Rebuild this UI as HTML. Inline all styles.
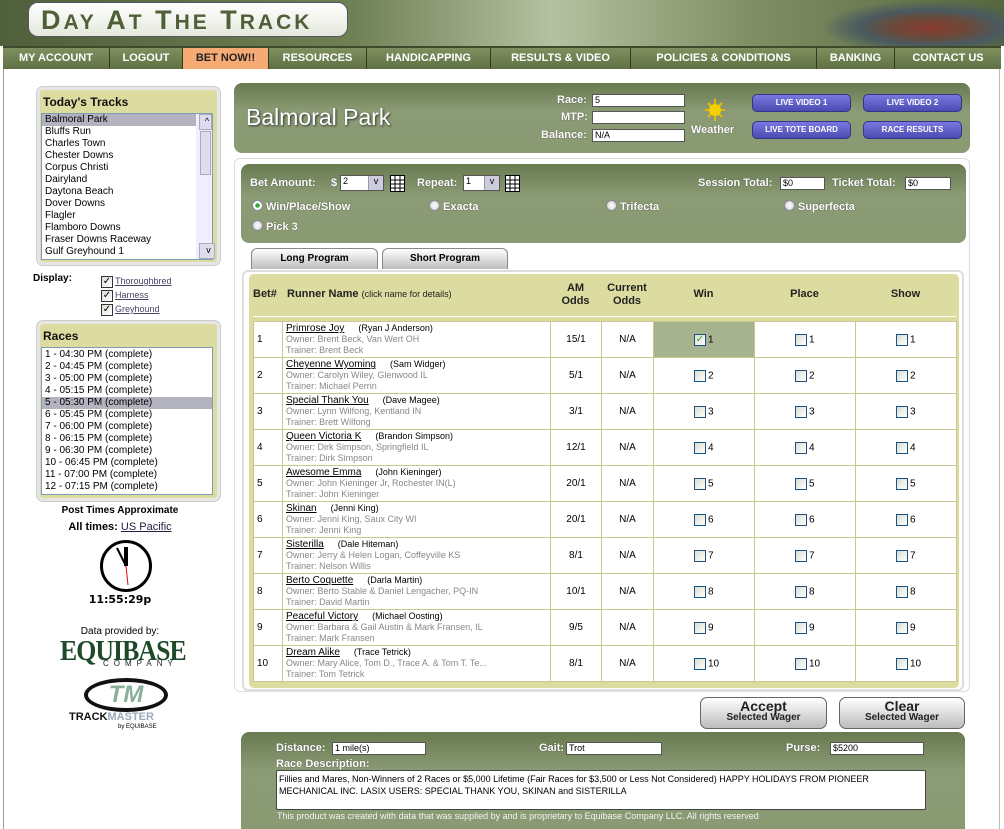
<!DOCTYPE html>
<html><head><meta charset="utf-8">
<style>
*{margin:0;padding:0;box-sizing:border-box}
body{width:1004px;height:829px;overflow:hidden;background:#fff;font-family:"Liberation Sans",sans-serif;position:relative;font-size:11px;color:#000}
.a{position:absolute}
.hdr{left:0;top:0;width:1004px;height:46px;background:linear-gradient(90deg,#4f603a 0%,#6f8055 35%,#b5c1a0 55%,#7f8e64 75%,#56673d 100%)}
.logo{left:28px;top:2px;width:320px;height:35px;background:linear-gradient(#fff,#e4e8dc);border:1px solid #556;border-radius:10px;font:bold 27px "Liberation Sans",sans-serif;color:#4f5f37;padding:2px 0 0 12px;letter-spacing:3px;white-space:nowrap}
.logo small{font-size:21px}
.nav{left:3px;top:46px;width:998px;height:23px;background:linear-gradient(#7f9060,#5f7042);border-top:2px solid #3f4a2b;display:flex}
.nav div{color:#fff;font-weight:bold;font-size:11px;text-align:center;line-height:21px;border-right:1px solid #2f3a1f}
.nav .on{background:#f6ab74;color:#222}
.side{left:3px;top:69px;width:1px;height:760px;background:#999}
.sider{left:999px;top:69px;width:1px;height:760px;background:#bbb}
.box{background:#dcdca0;border:3px solid #e6e6e6;border-radius:6px;box-shadow:0 0 0 1px #ccc}
.box h3{font-size:12px;font-weight:bold;padding:5px 3px 3px;color:#111}
.lst{background:#fff;border:1px solid #7f9db9;position:absolute;font-size:10px;line-height:12px}
.lst div{padding-left:3px;white-space:nowrap}
.sel{background:#b3b3c0}
.sb{position:absolute;right:0;top:0;width:16px;height:100%;background:#eef}
.green{background:linear-gradient(#687a50,#8b9b75 40%,#8a9a72);border-radius:8px}
.lab{color:#fff;font-weight:bold;font-size:11px;position:absolute;text-shadow:0 0 1px #333}
.inp{position:absolute;background:#fff;border:1px solid #555;height:13px;font-size:9px;line-height:11px;padding-left:2px}
.btn{position:absolute;width:99px;height:18px;border-radius:5px;background:linear-gradient(#7878e0,#4b4bb0);border:1px solid #33338a;color:#fff;font-weight:bold;font-size:8px;text-align:center;line-height:16px}
.tab{position:absolute;height:21px;border:1px solid #888;border-bottom:none;border-radius:6px 6px 0 0;background:linear-gradient(#fff,#bdbdbd);font-weight:bold;font-size:10px;text-align:center;line-height:20px}
table{border-collapse:collapse;position:absolute;left:253px;top:321px;width:703px;table-layout:fixed;background:#fff}
td{border:1px solid #c8c890;height:36px;font-size:10px;vertical-align:middle}
td.n{padding-left:3px;line-height:11px;font-size:9px;color:#888}
td.n a{color:#000;text-decoration:underline;font-size:10px}
td.n span{color:#000;margin-left:14px}
td.c{text-align:center}
td.w{padding-left:40px;font-size:10px}
.cb{display:inline-block;width:12px;height:12px;border:1px solid #1c5180;background:linear-gradient(135deg,#dcdcd4,#fff);vertical-align:middle;margin-right:2px;font-size:10px;line-height:10px;color:#2a2;text-align:center}
.hd{position:absolute;font-weight:bold;font-size:11px;color:#222;text-align:center}
.bigb{position:absolute;height:32px;border:1px solid #666;border-radius:7px;background:linear-gradient(#fff,#bcbcbc);text-align:center;color:#222;font-weight:bold;line-height:11px}
.bigb b{font-size:14px;display:block;margin-top:3px}
.bigb i{font-style:normal;font-size:10px}
.radio{display:inline-block;width:11px;height:11px;border-radius:50%;background:radial-gradient(#fff,#ccc);border:1px solid #889;vertical-align:-1px;margin-right:3px}
</style></head><body>
<div class="a hdr"></div>
<div class="a" style="left:820px;top:0;width:184px;height:46px;background:radial-gradient(ellipse at 60% 60%,#8a3a30 0%,#6a4a3a 25%,#4a5a60 45%,transparent 70%)"></div>
<div class="a logo">D<small>AY</small> A<small>T</small> T<small>HE</small> T<small>RACK</small></div>
<div class="a nav">
<div style="width:107px">MY ACCOUNT</div><div style="width:73px">LOGOUT</div><div class="on" style="width:86px">BET NOW!!</div><div style="width:98px">RESOURCES</div><div style="width:124px">HANDICAPPING</div><div style="width:140px">RESULTS &amp; VIDEO</div><div style="width:186px">POLICIES &amp; CONDITIONS</div><div style="width:78px">BANKING</div><div style="width:106px;border:none">CONTACT US</div>
</div>
<div class="a side"></div><div class="a sider"></div>

<div class="a box" style="left:37px;top:87px;width:183px;height:178px"><h3>Today's Tracks</h3></div>
<div class="lst" style="left:41px;top:113px;width:172px;height:147px">
<div class="sel">Balmoral Park</div><div>Bluffs Run</div><div>Charles Town</div><div>Chester Downs</div><div>Corpus Christi</div><div>Dairyland</div><div>Daytona Beach</div><div>Dover Downs</div><div>Flagler</div><div>Flamboro Downs</div><div>Fraser Downs Raceway</div><div>Gulf Greyhound 1</div>
<div class="sb"><div style="height:16px;background:#dde;border:1px solid #aab;font-size:9px;text-align:center">^</div><div style="margin:1px;height:44px;background:#dde;border:1px solid #aab"></div><div style="position:absolute;bottom:0;width:16px;height:16px;background:#dde;border:1px solid #aab;font-size:9px;text-align:center">v</div></div>
</div>
<div class="a" style="left:33px;top:273px;font-weight:bold;font-size:10px">Display:</div>
<div class="a" style="left:101px;top:274px;font-size:9px;line-height:14px">
<div><span class="cb" style="color:#000;border-color:#333">✓</span><u style="color:#446">Thoroughbred</u></div>
<div><span class="cb" style="color:#000;border-color:#333">✓</span><u style="color:#446">Harness</u></div>
<div><span class="cb" style="color:#000;border-color:#333">✓</span><u style="color:#446">Greyhound</u></div></div>

<div class="a box" style="left:37px;top:321px;width:183px;height:180px"><h3>Races</h3></div>
<div class="lst" style="left:41px;top:347px;width:172px;height:148px;padding-top:1px">
<div>1 - 04:30 PM (complete)</div><div>2 - 04:45 PM (complete)</div><div>3 - 05:00 PM (complete)</div><div>4 - 05:15 PM (complete)</div><div class="sel">5 - 05:30 PM (complete)</div><div>6 - 05:45 PM (complete)</div><div>7 - 06:00 PM (complete)</div><div>8 - 06:15 PM (complete)</div><div>9 - 06:30 PM (complete)</div><div>10 - 06:45 PM (complete)</div><div>11 - 07:00 PM (complete)</div><div>12 - 07:15 PM (complete)</div></div>
<div class="a" style="left:0;width:240px;top:505px;text-align:center;font-weight:bold;font-size:10px">Post Times Approximate</div>
<div class="a" style="left:0;width:240px;top:521px;text-align:center;font-size:11px"><b>All times:</b> <u style="color:#224">US Pacific</u></div>
<svg class="a" style="left:99px;top:539px" width="56" height="56"><circle cx="27" cy="27" r="24.5" fill="#fff" stroke="#000" stroke-width="3"/><line x1="27" y1="27" x2="27" y2="8" stroke="#000" stroke-width="4"/><line x1="27" y1="27" x2="18" y2="9" stroke="#000" stroke-width="2"/><line x1="27" y1="27" x2="29" y2="46" stroke="#e00" stroke-width="1"/></svg>
<div class="a" style="left:0;width:240px;top:593px;text-align:center;font-weight:bold;font-size:11px;font-family:'DejaVu Sans',sans-serif">11:55:29p</div>
<div class="a" style="left:0;width:240px;top:626px;text-align:center;font-size:10px">Data provided by:</div>
<div class="a" style="left:60px;top:636px;font:bold 28px 'Liberation Serif',serif;color:#1f4a2a;transform:scaleX(0.92);transform-origin:left;letter-spacing:-1px">EQUIBASE</div>
<div class="a" style="left:103px;top:659px;font-size:8px;letter-spacing:5px;color:#222">COMPANY</div>
<div class="a" style="left:84px;top:678px;width:84px;height:34px;border:4px solid #111;border-radius:50%;background:#fff;text-align:center;font:italic bold 24px 'Liberation Sans',sans-serif;color:#8ab09a;line-height:26px">TM</div>
<div class="a" style="left:69px;top:711px;font:bold 11px 'Liberation Sans',sans-serif;color:#111">TRACK<span style="color:#9ab">MASTER</span></div>
<div class="a" style="left:118px;top:724px;font-size:6px">by EQUIBASE</div>

<div class="a green" style="left:234px;top:83px;width:736px;height:70px"></div>
<div class="a" style="left:246px;top:104px;color:#fff;font-size:23px;text-shadow:1px 1px 2px #333">Balmoral Park</div>
<div class="lab" style="left:557px;top:94px">Race:</div><div class="inp" style="left:592px;top:94px;width:93px">5</div>
<div class="lab" style="left:561px;top:111px">MTP:</div><div class="inp" style="left:592px;top:111px;width:93px"></div>
<div class="lab" style="left:541px;top:129px">Balance:</div><div class="inp" style="left:592px;top:129px;width:93px">N/A</div>
<svg class="a" style="left:704px;top:98px" width="22" height="24"><g stroke="#e8b800" stroke-width="2"><line x1="11" y1="1" x2="11" y2="23"/><line x1="1" y1="12" x2="21" y2="12"/><line x1="4" y1="5" x2="18" y2="19"/><line x1="18" y1="5" x2="4" y2="19"/></g><circle cx="11" cy="12" r="6" fill="#f4d000"/></svg>
<div class="lab" style="left:691px;top:124px">Weather</div>
<div class="btn" style="left:752px;top:94px">LIVE VIDEO 1</div><div class="btn" style="left:863px;top:94px">LIVE VIDEO 2</div>
<div class="btn" style="left:752px;top:121px">LIVE TOTE BOARD</div><div class="btn" style="left:863px;top:121px">RACE RESULTS</div>

<div class="a" style="left:234px;top:158px;width:736px;height:534px;border:1px solid #ddd;border-radius:6px"></div>
<div class="a green" style="left:241px;top:164px;width:725px;height:79px"></div>
<div class="lab" style="left:250px;top:177px">Bet Amount:</div><div class="lab" style="left:331px;top:177px">$</div>
<div class="inp" style="left:340px;top:175px;width:44px;height:16px">2<span style="position:absolute;right:0;top:0;width:15px;height:14px;background:#ccd;border-left:1px solid #99a;text-align:center">v</span></div>
<svg class="a" style="left:390px;top:175px" width="15" height="17"><rect x=".5" y=".5" width="14" height="16" fill="#fff" stroke="#000"/><path d="M0 5H15M0 9H15M0 13H15M5 0V17M10 0V17" stroke="#000"/></svg>
<div class="lab" style="left:417px;top:177px">Repeat:</div>
<div class="inp" style="left:463px;top:175px;width:37px;height:16px">1<span style="position:absolute;right:0;top:0;width:15px;height:14px;background:#ccd;border-left:1px solid #99a;text-align:center">v</span></div>
<svg class="a" style="left:505px;top:175px" width="15" height="17"><rect x=".5" y=".5" width="14" height="16" fill="#fff" stroke="#000"/><path d="M0 5H15M0 9H15M0 13H15M5 0V17M10 0V17" stroke="#000"/></svg>
<div class="lab" style="left:698px;top:177px">Session Total:</div><div class="inp" style="left:780px;top:177px;width:45px">$0</div>
<div class="lab" style="left:832px;top:177px">Ticket Total:</div><div class="inp" style="left:905px;top:177px;width:46px">$0</div>
<div class="lab" style="left:252px;top:200px"><span class="radio" style="background:radial-gradient(#3a3 30%,#fff 40%)"></span>Win/Place/Show</div>
<div class="lab" style="left:429px;top:200px"><span class="radio"></span>Exacta</div>
<div class="lab" style="left:606px;top:200px"><span class="radio"></span>Trifecta</div>
<div class="lab" style="left:784px;top:200px"><span class="radio"></span>Superfecta</div>
<div class="lab" style="left:252px;top:220px"><span class="radio"></span>Pick 3</div>
<div class="tab" style="left:251px;top:248px;width:127px">Long Program</div>
<div class="tab" style="left:382px;top:248px;width:126px">Short Program</div>

<div class="a" style="left:242px;top:270px;width:722px;height:421px;border:2px solid #ddd;border-radius:6px"></div>
<div class="a" style="left:249px;top:274px;width:710px;height:414px;background:#dcdca0;border-radius:5px"></div>
<div class="a" style="left:253px;top:316px;width:703px;height:1px;background:#fff"></div>
<div class="hd" style="left:253px;top:288px">Bet#</div>
<div class="hd" style="left:287px;top:288px">Runner Name <span style="font-weight:normal;font-size:9px">(click name for details)</span></div>
<div class="hd" style="left:550px;top:282px;width:51px;line-height:13px">AM<br>Odds</div>
<div class="hd" style="left:601px;top:282px;width:52px;line-height:13px">Current<br>Odds</div>
<div class="hd" style="left:653px;top:288px;width:101px">Win</div>
<div class="hd" style="left:754px;top:288px;width:101px">Place</div>
<div class="hd" style="left:855px;top:288px;width:101px">Show</div>
<table>
<colgroup><col style="width:29px"><col style="width:268px"><col style="width:51px"><col style="width:52px"><col style="width:101px"><col style="width:101px"><col style="width:101px"></colgroup>
<tr><td style="padding-left:3px">1</td><td class="n"><a>Primrose Joy</a><span>(Ryan J Anderson)</span><br>Owner: Brent Beck, Van Wert OH<br>Trainer: Brent Beck</td><td class="c">15/1</td><td class="c">N/A</td><td class="w" style="background:#a7b28e"><span class="cb">✓</span>1</td><td class="w"><span class="cb"></span>1</td><td class="w"><span class="cb"></span>1</td></tr>
<tr><td style="padding-left:3px">2</td><td class="n"><a>Cheyenne Wyoming</a><span>(Sam Widger)</span><br>Owner: Carolyn Wiley, Glenwood IL<br>Trainer: Michael Perrin</td><td class="c">5/1</td><td class="c">N/A</td><td class="w"><span class="cb"></span>2</td><td class="w"><span class="cb"></span>2</td><td class="w"><span class="cb"></span>2</td></tr>
<tr><td style="padding-left:3px">3</td><td class="n"><a>Special Thank You</a><span>(Dave Magee)</span><br>Owner: Lynn Wilfong, Kentland IN<br>Trainer: Brett Wilfong</td><td class="c">3/1</td><td class="c">N/A</td><td class="w"><span class="cb"></span>3</td><td class="w"><span class="cb"></span>3</td><td class="w"><span class="cb"></span>3</td></tr>
<tr><td style="padding-left:3px">4</td><td class="n"><a>Queen Victoria K</a><span>(Brandon Simpson)</span><br>Owner: Dirk Simpson, Springfield IL<br>Trainer: Dirk Simpson</td><td class="c">12/1</td><td class="c">N/A</td><td class="w"><span class="cb"></span>4</td><td class="w"><span class="cb"></span>4</td><td class="w"><span class="cb"></span>4</td></tr>
<tr><td style="padding-left:3px">5</td><td class="n"><a>Awesome Emma</a><span>(John Kieninger)</span><br>Owner: John Kieninger Jr, Rochester IN(L)<br>Trainer: John Kieninger</td><td class="c">20/1</td><td class="c">N/A</td><td class="w"><span class="cb"></span>5</td><td class="w"><span class="cb"></span>5</td><td class="w"><span class="cb"></span>5</td></tr>
<tr><td style="padding-left:3px">6</td><td class="n"><a>Skinan</a><span>(Jenni King)</span><br>Owner: Jenni King, Saux City WI<br>Trainer: Jenni King</td><td class="c">20/1</td><td class="c">N/A</td><td class="w"><span class="cb"></span>6</td><td class="w"><span class="cb"></span>6</td><td class="w"><span class="cb"></span>6</td></tr>
<tr><td style="padding-left:3px">7</td><td class="n"><a>Sisterilla</a><span>(Dale Hiteman)</span><br>Owner: Jerry &amp; Helen Logan, Coffeyville KS<br>Trainer: Nelson Willis</td><td class="c">8/1</td><td class="c">N/A</td><td class="w"><span class="cb"></span>7</td><td class="w"><span class="cb"></span>7</td><td class="w"><span class="cb"></span>7</td></tr>
<tr><td style="padding-left:3px">8</td><td class="n"><a>Berto Coquette</a><span>(Darla Martin)</span><br>Owner: Berto Stable &amp; Daniel Lengacher, PQ-IN<br>Trainer: David Martin</td><td class="c">10/1</td><td class="c">N/A</td><td class="w"><span class="cb"></span>8</td><td class="w"><span class="cb"></span>8</td><td class="w"><span class="cb"></span>8</td></tr>
<tr><td style="padding-left:3px">9</td><td class="n"><a>Peaceful Victory</a><span>(Michael Oosting)</span><br>Owner: Barbara &amp; Gail Austin &amp; Mark Fransen, IL<br>Trainer: Mark Fransen</td><td class="c">9/5</td><td class="c">N/A</td><td class="w"><span class="cb"></span>9</td><td class="w"><span class="cb"></span>9</td><td class="w"><span class="cb"></span>9</td></tr>
<tr><td style="padding-left:3px">10</td><td class="n"><a>Dream Alike</a><span>(Trace Tetrick)</span><br>Owner: Mary Alice, Tom D., Trace A. &amp; Tom T. Te...<br>Trainer: Tom Tetrick</td><td class="c">8/1</td><td class="c">N/A</td><td class="w"><span class="cb"></span>10</td><td class="w"><span class="cb"></span>10</td><td class="w"><span class="cb"></span>10</td></tr>
</table>

<div class="bigb" style="left:700px;top:697px;width:127px"><b>Accept</b><i>Selected Wager</i></div>
<div class="bigb" style="left:839px;top:697px;width:126px"><b>Clear</b><i>Selected Wager</i></div>

<div class="a green" style="left:241px;top:732px;width:724px;height:97px;border-radius:8px 8px 0 0"></div>
<div class="lab" style="left:276px;top:742px">Distance:</div><div class="inp" style="left:332px;top:742px;width:94px">1 mile(s)</div>
<div class="lab" style="left:539px;top:742px">Gait:</div><div class="inp" style="left:566px;top:742px;width:96px">Trot</div>
<div class="lab" style="left:786px;top:742px">Purse:</div><div class="inp" style="left:830px;top:742px;width:94px">$5200</div>
<div class="lab" style="left:276px;top:758px">Race Description:</div>
<div class="a" style="left:276px;top:770px;width:650px;height:40px;background:#fff;border:1px solid #444;border-radius:2px;font-size:9px;line-height:12px;padding:2px 2px">Fillies and Mares, Non-Winners of 2 Races or $5,000 Lifetime (Fair Races for $3,500 or Less Not Considered) HAPPY HOLIDAYS FROM PIONEER MECHANICAL INC. LASIX USERS: SPECIAL THANK YOU, SKINAN and SISTERILLA</div>
<div class="a" style="left:277px;top:811px;color:#f4f4f4;font-size:9px">This product was created with data that was supplied by and is proprietary to Equibase Company LLC. All rights reserved</div>
</body></html>
